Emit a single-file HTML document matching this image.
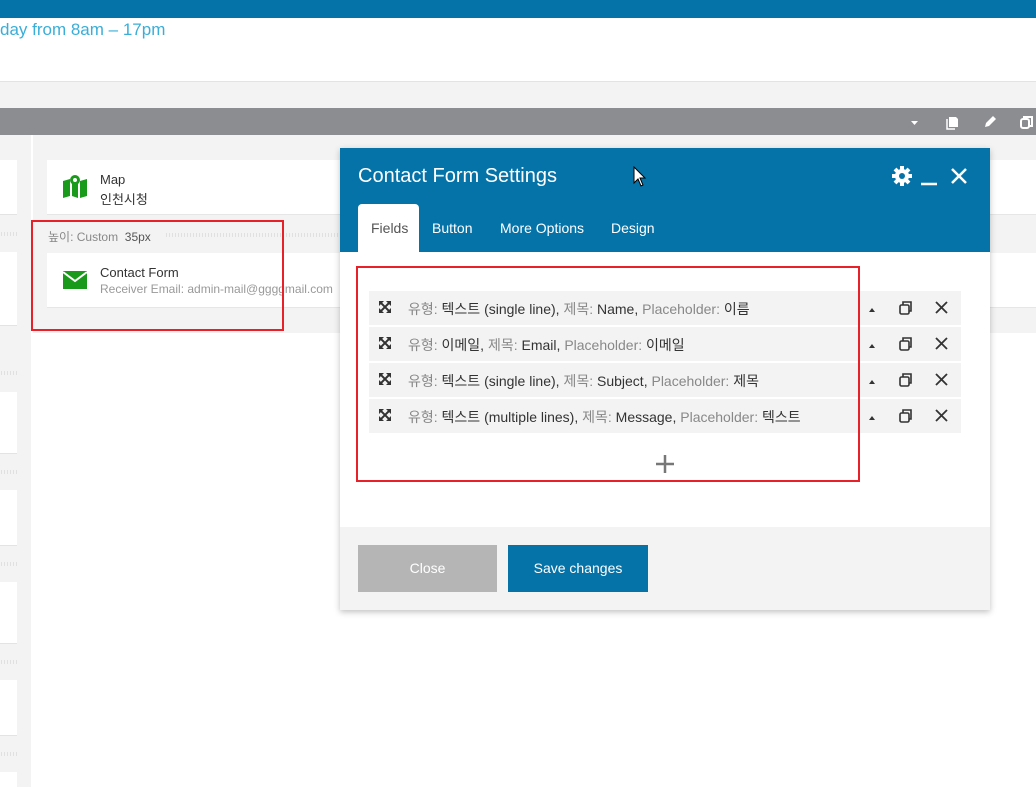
<!DOCTYPE html>
<html><head><meta charset="utf-8"><style>
*{box-sizing:border-box;margin:0;padding:0}
body{width:1036px;height:787px;overflow:hidden;background:#fff;font-family:"Liberation Sans","Noto Sans CJK KR",sans-serif;position:relative;font-size:13px;color:#333}
.a{position:absolute}
.sep{position:absolute;height:4px;background-image:radial-gradient(#ccc 0.6px,transparent 0.8px);background-size:3px 2px}
.row{position:absolute;left:369px;width:592px;height:34px;background:#f3f3f3;font-size:14px;color:#333}
.row .t{position:absolute;left:39px;top:8px;white-space:nowrap}
.g{color:#888}
.row svg{position:absolute}
</style></head><body>
<div class="a" style="left:0;top:0;width:1036px;height:18px;background:#0573a8"></div>
<div class="a" style="left:0;top:20px;font-size:17px;color:#3aaed8">day from 8am – 17pm</div>
<div class="a" style="left:0;top:81px;width:1036px;height:27px;background:#f3f3f3;border-top:1px solid #e3e3e3"></div>
<div class="a" style="left:0;top:108px;width:1036px;height:27px;background:#8b8d90"></div>
<svg class="a" style="left:908px;top:114px" width="128" height="16"><path d="M3 7h7l-3.5 4z" fill="#fff"/><path d="M41 3h7l2 2v8h-9z" fill="#fff"/><path d="M39 5v10h8" stroke="#fff" fill="none" stroke-width="1.5"/><path d="M77 13l1-4 7-7 3 3-7 7z" fill="#fff"/><rect x="113" y="5" width="8" height="9" rx="2" fill="none" stroke="#fff" stroke-width="2"/><path d="M116 5V3h8v9h-3" fill="none" stroke="#fff" stroke-width="2"/></svg>
<!-- left column -->
<div class="a" style="left:0;top:135px;width:31px;height:652px;background:#f3f3f3"></div>
<div class="a" style="left:0;top:160px;width:17px;height:55px;background:#fff;border-bottom:1px solid #e3e3e3"></div>
<div class="a" style="left:0;top:252px;width:17px;height:74px;background:#fff;border-bottom:1px solid #e3e3e3"></div>
<div class="a" style="left:0;top:392px;width:17px;height:62px;background:#fff;border-bottom:1px solid #e3e3e3"></div>
<div class="a" style="left:0;top:490px;width:17px;height:56px;background:#fff;border-bottom:1px solid #e3e3e3"></div>
<div class="a" style="left:0;top:582px;width:17px;height:62px;background:#fff;border-bottom:1px solid #e3e3e3"></div>
<div class="a" style="left:0;top:680px;width:17px;height:56px;background:#fff;border-bottom:1px solid #e3e3e3"></div>
<div class="a" style="left:0;top:772px;width:17px;height:20px;background:#fff"></div>
<div class="sep" style="left:0;top:232px;width:17px"></div>
<div class="sep" style="left:0;top:371px;width:17px"></div>
<div class="sep" style="left:0;top:470px;width:17px"></div>
<div class="sep" style="left:0;top:562px;width:17px"></div>
<div class="sep" style="left:0;top:660px;width:17px"></div>
<div class="sep" style="left:0;top:752px;width:17px"></div>
<!-- main column -->
<div class="a" style="left:33px;top:135px;width:1003px;height:198px;background:#f3f3f3"></div>
<div class="a" style="left:47px;top:160px;width:989px;height:55px;background:#fff;border-bottom:1px solid #e6e6e6"></div>
<svg class="a" style="left:62px;top:174px" width="26" height="24"><path d="M1 7l7-2v17l-7 2zM10 5l6 2v17l-6-2zM18 7l7-2v17l-7 2z" fill="#1a9a1a"/><circle cx="13" cy="6" r="5" fill="#1a9a1a"/><path d="M9 8l4 6 4-6z" fill="#1a9a1a"/><circle cx="13" cy="6" r="2" fill="#fff"/></svg>
<div class="a" style="left:100px;top:172px;font-size:13px">Map</div>
<div class="a" style="left:100px;top:189px;font-size:13px">인천시청</div>
<div class="a" style="left:48px;top:228px;font-size:12px;color:#888">높이: Custom <span style="color:#555">&nbsp;35px</span></div>
<div class="sep" style="left:165px;top:233px;width:180px"></div>
<div class="a" style="left:47px;top:253px;width:989px;height:55px;background:#fff;border-bottom:1px solid #e6e6e6"></div>
<svg class="a" style="left:63px;top:271px" width="24" height="18"><rect x="0" y="0" width="24" height="18" fill="#1a9a1a"/><path d="M0 1l12 9 12-9" stroke="#fff" stroke-width="2" fill="none"/></svg>
<div class="a" style="left:100px;top:265px;font-size:13px">Contact Form</div>
<div class="a" style="left:100px;top:282px;font-size:12px;color:#999;white-space:nowrap">Receiver Email: admin-mail@ggggmail.com</div>
<div class="a" style="left:31px;top:220px;width:253px;height:111px;border:2px solid #e8202a"></div>
<!-- dialog -->
<div class="a" style="left:340px;top:148px;width:650px;height:462px;background:#fff;box-shadow:0 2px 6px rgba(0,0,0,.25)">
<div class="a" style="left:0;top:0;width:650px;height:104px;background:#0573a8"></div>
<div class="a" style="left:18px;top:17px;font-size:20px;color:#fff;font-weight:300">Contact Form Settings</div>
<svg class="a" style="left:550px;top:16px" width="80" height="24"><g fill="#fff"><circle cx="12" cy="12" r="7"/><g stroke="#fff" stroke-width="4"><path d="M12 2v20M2 12h20M5 5l14 14M19 5L5 19"/></g></g><circle cx="12" cy="12" r="3" fill="#0573a8"/><path d="M31 20h16" stroke="#fff" stroke-width="2.5"/><path d="M62 5l14 14M76 5L62 19" stroke="#fff" stroke-width="2.5"/></svg>
<div class="a" style="left:18px;top:56px;width:61px;height:48px;background:#fff;border-radius:4px 4px 0 0"></div>
<div class="a" style="left:31px;top:72px;font-size:14px;color:#555">Fields</div>
<div class="a" style="left:92px;top:72px;font-size:14px;color:#fff">Button</div>
<div class="a" style="left:160px;top:72px;font-size:14px;color:#fff">More Options</div>
<div class="a" style="left:271px;top:72px;font-size:14px;color:#fff">Design</div>
<div class="a" style="left:0;top:379px;width:650px;height:83px;background:#f3f3f3"></div>
<div class="a" style="left:18px;top:397px;width:139px;height:47px;background:#b5b5b5;color:#fff;font-size:14px;text-align:center;line-height:47px">Close</div>
<div class="a" style="left:168px;top:397px;width:140px;height:47px;background:#0573a8;color:#fff;font-size:14px;text-align:center;line-height:47px">Save changes</div>
</div>
<div class="row" style="top:291px"><div class="t"><span class="g">유형:</span> 텍스트 (single line), <span class="g">제목:</span> Name, <span class="g">Placeholder:</span> 이름</div></div>
<div class="row" style="top:327px"><div class="t"><span class="g">유형:</span> 이메일, <span class="g">제목:</span> Email, <span class="g">Placeholder:</span> 이메일</div></div>
<div class="row" style="top:363px"><div class="t"><span class="g">유형:</span> 텍스트 (single line), <span class="g">제목:</span> Subject, <span class="g">Placeholder:</span> 제목</div></div>
<div class="row" style="top:399px"><div class="t"><span class="g">유형:</span> 텍스트 (multiple lines), <span class="g">제목:</span> Message, <span class="g">Placeholder:</span> 텍스트</div></div>
<svg class="a" style="left:378px;top:298px" width="590" height="130">
<defs><g id="r"><path d="M2 2l10 10M12 2L2 12" stroke="#333" stroke-width="2"/><path d="M1 1h5L1 6zM13 1v5L8 1zM1 13V8l5 5zM13 13H8l5-5z" fill="#333"/><path d="M491 12h6l-3-4z" fill="#333"/><rect x="522" y="5" width="9" height="9" rx="1.5" fill="none" stroke="#333" stroke-width="1.6"/><path d="M525 5V2h8v9h-2" fill="none" stroke="#333" stroke-width="1.6"/><path d="M558 2l11 11M569 2L558 13" stroke="#333" stroke-width="1.8"/></g></defs>
<use href="#r" y="2"/><use href="#r" y="38"/><use href="#r" y="74"/><use href="#r" y="110"/></svg>
<svg class="a" style="left:655px;top:454px" width="20" height="20"><path d="M10 1v18M1 10h18" stroke="#777" stroke-width="2.5"/></svg>
<div class="a" style="left:356px;top:266px;width:504px;height:216px;border:2px solid #e8202a"></div>
<svg class="a" style="left:633px;top:166px" width="14" height="22"><path d="M1 1v16l4-4 3 7 2-1-3-7h5z" fill="#fff" stroke="#000"/></svg>
</body></html>
